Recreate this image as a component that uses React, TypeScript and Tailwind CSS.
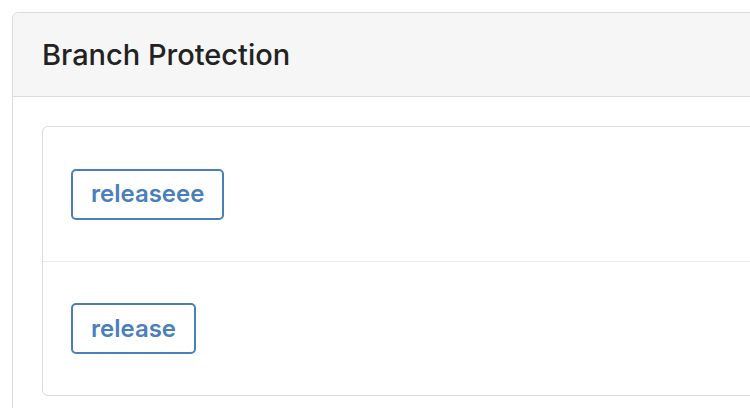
import React from "react";

const branches = ["releaseee", "release"];

export default function App() {
  return (
    <div
      className="w-[750px] h-[408px] overflow-hidden bg-white pt-3 pl-3"
      style={{ fontFamily: 'Inter, "Noto Sans", sans-serif' }}
    >
      <div className="w-[800px] rounded-md border border-[#dcdcdc] bg-white">
        <div className="flex h-[84px] items-center rounded-t-md border-b border-[#dcdcdc] bg-[#f6f6f6] pl-[29px]">
          <h2 className="text-[29px] font-medium text-[#222]">
            Branch Protection
          </h2>
        </div>
        <div className="px-[29px] pt-[29px] pb-[29px]">
          <div className="rounded-md border border-[#dcdcdc]">
            {branches.map((name, i) => (
              <div
                key={name}
                className={`flex h-[134px] items-center pl-[28px] ${
                  i > 0 ? "border-t border-[#ebebeb]" : ""
                }`}
              >
                <span className="inline-flex h-[51px] items-center rounded-[5px] border-2 border-[#4a7fbe] px-[18px] text-[24px] font-semibold text-[#4a7fbe]">
                  {name}
                </span>
              </div>
            ))}
          </div>
        </div>
      </div>
    </div>
  );
}
